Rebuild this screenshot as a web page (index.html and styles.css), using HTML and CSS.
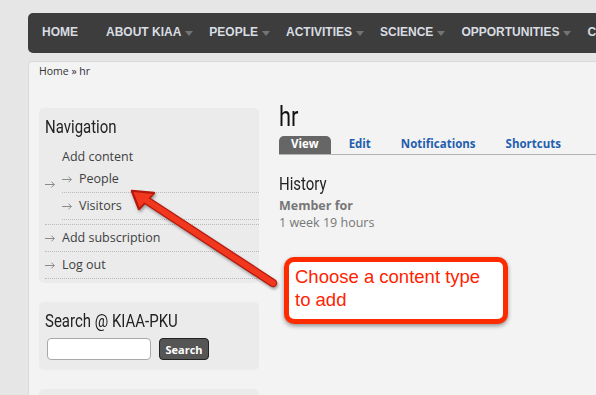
FILE: index.html
```html
<!DOCTYPE html>
<html lang="en">
<head>
<meta charset="utf-8">
<title>hr | KIAA-PKU</title>
<link rel="stylesheet" href="styles.css">
</head>
<body>
<div class="page">
  <nav class="topnav">
    <a class="nav-item">HOME<span class="caret is-hidden"></span></a>
    <a class="nav-item">ABOUT KIAA<span class="caret"></span></a>
    <a class="nav-item">PEOPLE<span class="caret"></span></a>
    <a class="nav-item">ACTIVITIES<span class="caret"></span></a>
    <a class="nav-item">SCIENCE<span class="caret"></span></a>
    <a class="nav-item">OPPORTUNITIES<span class="caret"></span></a>
    <a class="nav-item">CONTACT<span class="caret is-hidden"></span></a>
  </nav>

  <div class="panel">
    <div class="breadcrumb"><a class="crumb">Home</a> » hr</div>

    <div class="columns">
      <aside class="sidebar">
        <section class="block">
          <h2 class="block-title"><span class="narrow">Navigation</span></h2>
          <ul class="menu">
            <li class="menu-item">
              <svg class="arr" width="10" height="7" viewBox="0 0 10 7"><path d="M0 3.5H9.3M6.5 0.7L9.3 3.5L6.5 6.3" fill="none" stroke="#8a8a8a" stroke-width="1"/></svg>
              <div class="item-body">
                <a class="menu-link">Add content</a>
                <ul class="menu">
                  <li class="menu-item">
                    <svg class="arr" width="10" height="7" viewBox="0 0 10 7"><path d="M0 3.5H9.3M6.5 0.7L9.3 3.5L6.5 6.3" fill="none" stroke="#8a8a8a" stroke-width="1"/></svg>
                    <div class="item-body"><a class="menu-link">People</a></div>
                  </li>
                  <li class="menu-item">
                    <svg class="arr" width="10" height="7" viewBox="0 0 10 7"><path d="M0 3.5H9.3M6.5 0.7L9.3 3.5L6.5 6.3" fill="none" stroke="#8a8a8a" stroke-width="1"/></svg>
                    <div class="item-body"><a class="menu-link">Visitors</a></div>
                  </li>
                </ul>
              </div>
            </li>
            <li class="menu-item">
              <svg class="arr" width="10" height="7" viewBox="0 0 10 7"><path d="M0 3.5H9.3M6.5 0.7L9.3 3.5L6.5 6.3" fill="none" stroke="#8a8a8a" stroke-width="1"/></svg>
              <div class="item-body"><a class="menu-link">Add subscription</a></div>
            </li>
            <li class="menu-item">
              <svg class="arr" width="10" height="7" viewBox="0 0 10 7"><path d="M0 3.5H9.3M6.5 0.7L9.3 3.5L6.5 6.3" fill="none" stroke="#8a8a8a" stroke-width="1"/></svg>
              <div class="item-body"><a class="menu-link">Log out</a></div>
            </li>
          </ul>
        </section>

        <section class="block">
          <h2 class="block-title"><span class="narrow">Search @ KIAA-PKU</span></h2>
          <form class="search-form">
            <input class="search-input" type="text">
            <button class="search-btn" type="button">Search</button>
          </form>
        </section>

        <section class="block block-tall">
          <h2 class="block-title">&nbsp;</h2>
        </section>
      </aside>

      <main class="main">
        <h1 class="page-title"><span class="narrow">hr</span></h1>
        <ul class="tabs">
          <li><a class="tab is-active">View</a></li>
          <li><a class="tab">Edit</a></li>
          <li><a class="tab">Notifications</a></li>
          <li><a class="tab">Shortcuts</a></li>
        </ul>
        <h2 class="section-title"><span class="narrow">History</span></h2>
        <dl class="history">
          <dt>Member for</dt>
          <dd>1 week 19 hours</dd>
        </dl>
      </main>
    </div>
  </div>

  <svg class="pointer" width="596" height="395" viewBox="0 0 596 395">
    <line x1="273" y1="283" x2="146" y2="200" stroke="#b5180c" stroke-width="8.5" stroke-linecap="round"/>
    <polygon points="132,191 154,193 139,209" fill="#b5180c" stroke="#b5180c" stroke-width="2.5" stroke-linejoin="round"/>
    <line x1="273" y1="283" x2="146" y2="200" stroke="#f2371f" stroke-width="6" stroke-linecap="round"/>
    <polygon points="133.5,192 152.5,194 139.5,207.5" fill="#f2371f"/>
  </svg>

  <div class="callout">Choose a content type<br>to add</div>
</div>
</body>
</html>
```

FILE: styles.css
```css
html, body {
  margin: 0;
  padding: 0;
  background: #e6e6e6;
  overflow: hidden;
}

body {
  font-family: "Open Sans", "DejaVu Sans", sans-serif;
  color: #3a3a3a;
}

.page {
  position: relative;
  width: 1000px;
  height: 395px;
  padding: 13px 0 0 28px;
  box-sizing: border-box;
}

/* ---------- top navigation ---------- */
.topnav {
  display: flex;
  align-items: center;
  height: 40px;
  box-sizing: border-box;
  padding: 0 0 2px 14px;
  background: #3d3d3d;
  border-radius: 5px 0 0 5px;
  gap: 16px;
}

.nav-item {
  display: inline-flex;
  align-items: center;
  font-family: "Liberation Sans", Arial, sans-serif;
  font-weight: bold;
  font-size: 12px;
  color: #d9dde3;
  white-space: nowrap;
}

.caret {
  width: 0;
  height: 0;
  margin: 3px 0 0 4px;
  border-left: 4.5px solid transparent;
  border-right: 4.5px solid transparent;
  border-top: 5px solid #747474;
}

.caret.is-hidden {
  visibility: hidden;
}

/* ---------- content panel ---------- */
.panel {
  margin-top: 8px;
  background: #f3f3f3;
  border-top: 1px solid #dadada;
  border-left: 1px solid #dadada;
  border-top-left-radius: 4px;
  padding: 2px 0 0 10px;
  height: 400px;
}

.breadcrumb {
  font-size: 10.5px;
  line-height: 14px;
  color: #2c2c3a;
}

.crumb {
  color: #333;
}

.columns {
  display: grid;
  grid-template-columns: 220px 1fr;
  column-gap: 20px;
  align-items: start;
  padding-top: 24px;
}

/* condensed heading face */
.narrow {
  display: inline-block;
  font-family: "Roboto", "DejaVu Sans", sans-serif;
  transform: scaleX(0.81);
  transform-origin: left center;
  white-space: nowrap;
}

/* ---------- sidebar ---------- */
.sidebar {
  margin-top: 6px;
}

.block {
  background: #ebebeb;
  border-radius: 5px;
  padding: 8px 0 4px 6px;
  margin-bottom: 19px;
}

.block-title {
  margin: 0 0 6px 0;
  font-family: "Roboto", "DejaVu Sans", sans-serif;
  font-weight: normal;
  font-size: 18.5px;
  line-height: 22px;
  color: #222;
}

.block-tall {
  height: 60px;
}

.menu {
  list-style: none;
  margin: 0;
  padding: 0;
}

.menu-item {
  display: flex;
  align-items: center;
  padding: 4px 0;
  border-bottom: 1px dotted #b9b9b9;
}

.arr {
  flex: none;
  margin-right: 7px;
}

.item-body {
  flex: 1;
  min-width: 0;
}

.menu-link {
  display: block;
  font-size: 12.5px;
  line-height: 18px;
  color: #3f3f3f;
}

.search-form {
  display: flex;
  align-items: center;
  gap: 8px;
  margin: 0 0 0 2px;
  padding-bottom: 6px;
}

.search-input {
  width: 104px;
  height: 22px;
  box-sizing: border-box;
  border: 1px solid #a9a9a9;
  border-radius: 4px;
  background: #fff;
  margin: 0;
  padding: 0 4px;
}

.search-btn {
  width: 50px;
  height: 22px;
  box-sizing: border-box;
  margin: 0;
  padding: 0;
  border: 1px solid #222;
  border-radius: 4px;
  background: #555;
  color: #fff;
  font-family: "Open Sans", "DejaVu Sans", sans-serif;
  font-weight: bold;
  font-size: 11px;
}

/* ---------- main ---------- */
.main {
  min-width: 0;
}

.page-title {
  margin: 0 0 4px 0;
  font-family: "Roboto", "DejaVu Sans", sans-serif;
  font-weight: normal;
  font-size: 27px;
  line-height: 30px;
  color: #111;
}

.tabs {
  display: flex;
  list-style: none;
  margin: 0;
  padding: 0;
  border-bottom: 1px solid #b3b3b3;
  gap: 6px;
}

.tab {
  display: block;
  padding: 0 12px 2px;
  line-height: 16px;
  font-size: 11.5px;
  font-weight: bold;
  color: #1f5fae;
  border-radius: 5px 5px 0 0;
}

.tab.is-active {
  background: #666;
  color: #fff;
}

.section-title {
  margin: 18px 0 0 0;
  font-family: "Roboto", "DejaVu Sans", sans-serif;
  font-weight: normal;
  font-size: 18.5px;
  line-height: 22px;
  color: #222;
}

.history {
  margin: 2px 0 0 0;
  font-size: 12.5px;
  line-height: 17px;
  color: #777;
}

.history dt {
  font-weight: bold;
}

.history dd {
  margin: 0;
}

/* ---------- annotation overlay ---------- */
.pointer {
  position: absolute;
  left: 0;
  top: 0;
  pointer-events: none;
  filter: drop-shadow(1px 2px 1.5px rgba(0, 0, 0, 0.35));
}

.callout {
  position: absolute;
  left: 284px;
  top: 257px;
  width: 224px;
  height: 67px;
  box-sizing: border-box;
  border: 5px solid #fe2a00;
  border-radius: 10px;
  background: #fff;
  padding: 4px 0 0 6px;
  font-family: "Liberation Sans", Arial, sans-serif;
  font-size: 18.5px;
  line-height: 22.5px;
  color: #ff2200;
  box-shadow: 0 2px 4px rgba(0, 0, 0, 0.4);
}
```
